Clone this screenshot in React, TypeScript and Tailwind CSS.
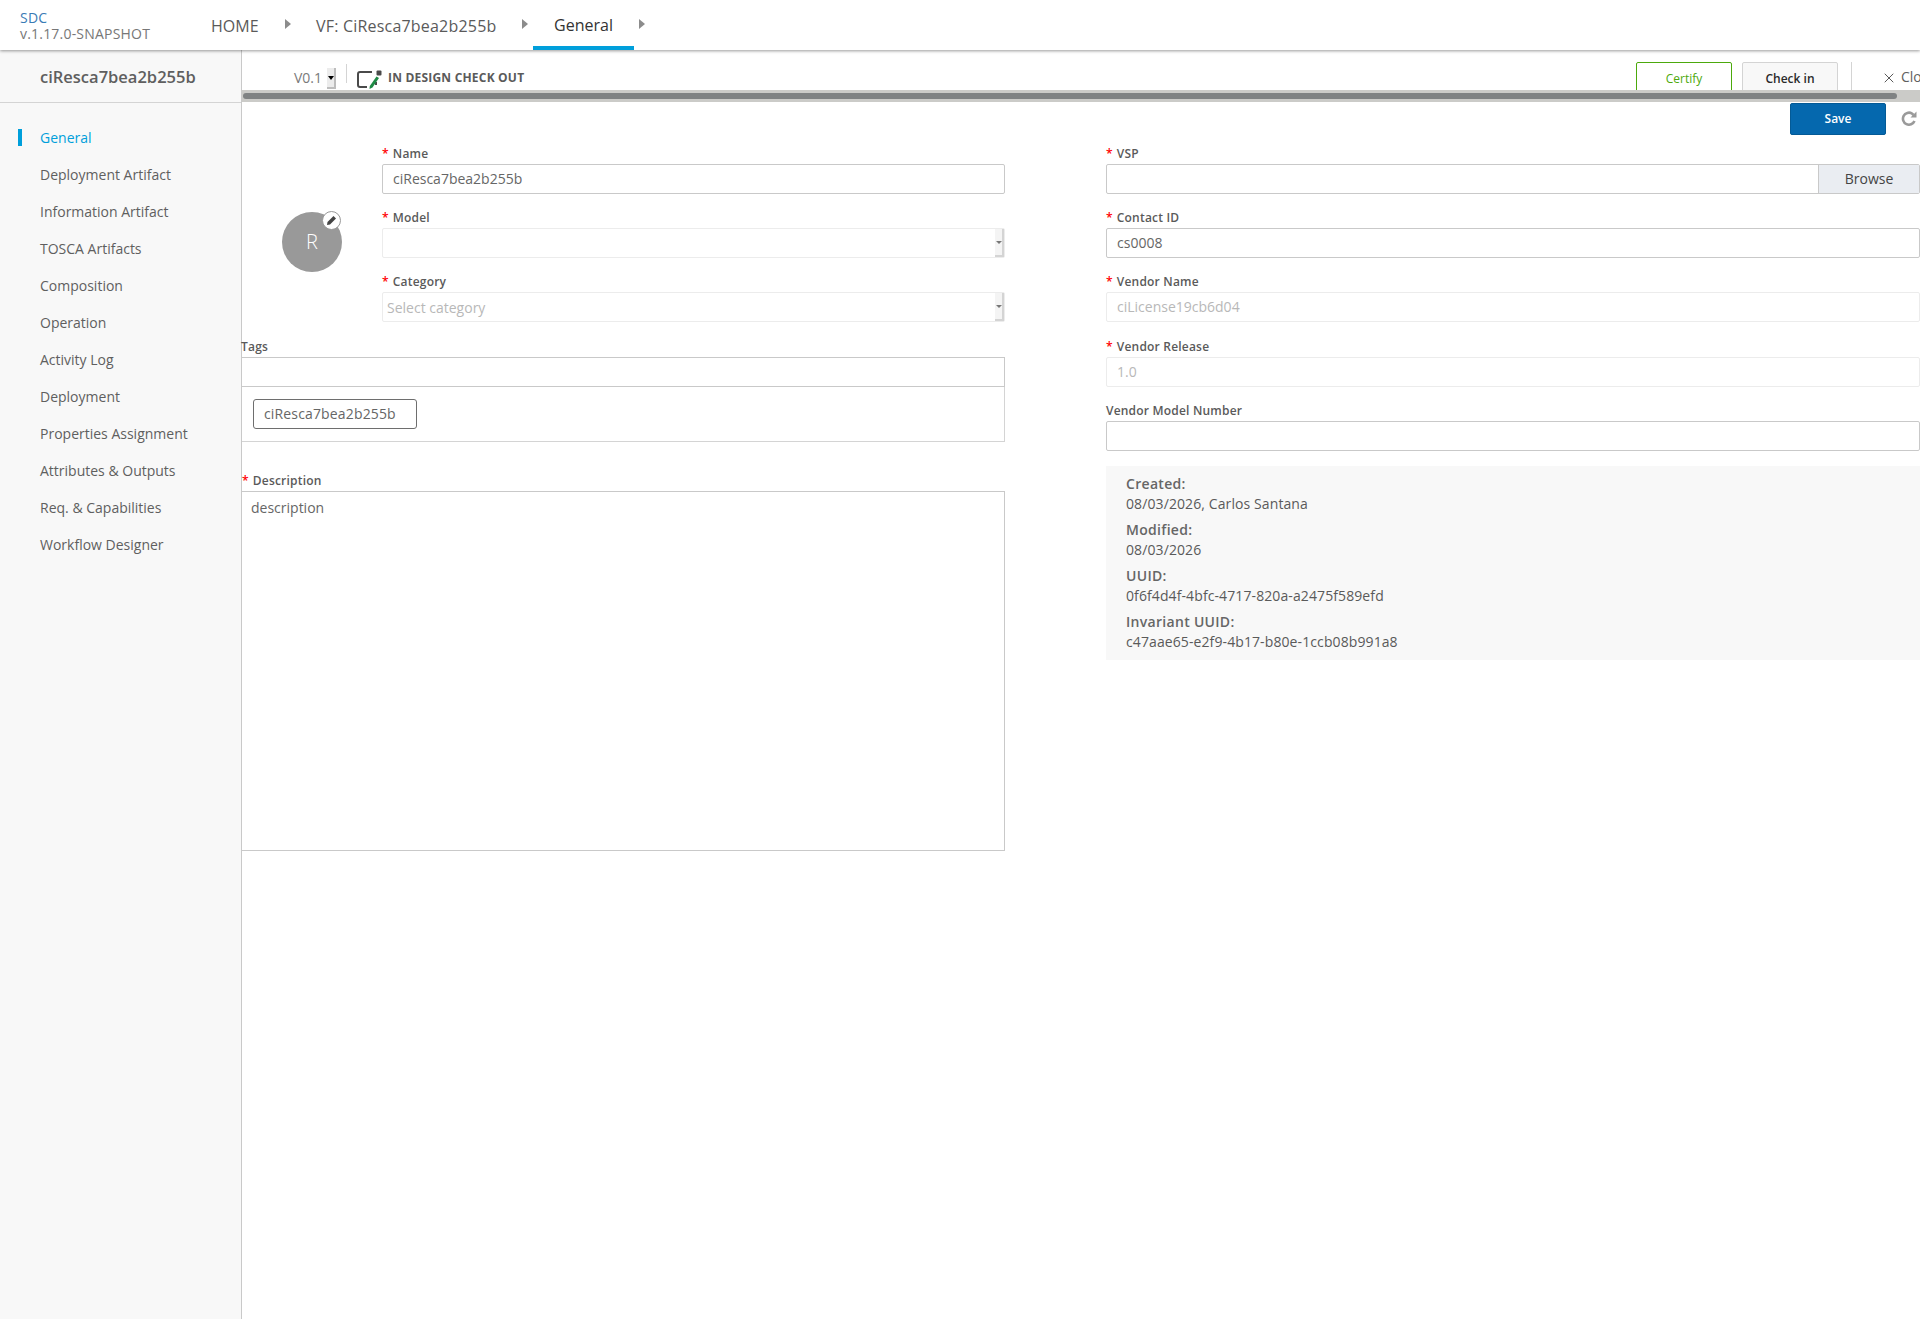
import { X } from "lucide-react";

const navItems = [
  "General",
  "Deployment Artifact",
  "Information Artifact",
  "TOSCA Artifacts",
  "Composition",
  "Operation",
  "Activity Log",
  "Deployment",
  "Properties Assignment",
  "Attributes & Outputs",
  "Req. & Capabilities",
  "Workflow Designer",
];

const info = [
  ["Created:", "08/03/2026, Carlos Santana"],
  ["Modified:", "08/03/2026"],
  ["UUID:", "0f6f4d4f-4bfc-4717-820a-a2475f589efd"],
  ["Invariant UUID:", "c47aae65-e2f9-4b17-b80e-1ccb08b991a8"],
];

const Arrow = () => (
  <span className="mb-[2px] h-0 w-0 border-y-[5px] border-l-[6px] border-y-transparent border-l-[#8c8c8c]" />
);

const Label = ({ text, required = true }: { text: string; required?: boolean }) => (
  <div className="mb-[3px] flex h-[15px] items-center text-[12px] leading-[15px] font-semibold tracking-[0.2px] text-[#5a5a5a]">
    {required && <span className="mr-[4px] text-[#ff0000]">*</span>}
    {text}
  </div>
);

const Field = ({
  label,
  value = "",
  required = true,
  disabled = false,
}: {
  label: string;
  value?: string;
  required?: boolean;
  disabled?: boolean;
}) => (
  <div className="h-[64.2px]">
    <Label text={label} required={required} />
    <div
      className={`h-[30px] rounded-[2px] border px-[10px] text-[14px] leading-[28px] ${
        disabled ? "border-[#ececec] text-[#b8b8b8]" : "border-[#c9c9c9] text-[#666]"
      }`}
    >
      {value}
    </div>
  </div>
);

const SelectField = ({ label, placeholder = "" }: { label: string; placeholder?: string }) => (
  <div className="h-[64.2px]">
    <Label text={label} />
    <div className="flex h-[30px] items-stretch rounded-[2px] border border-[#ececec]">
      <div className="flex-1 pl-[4px] text-[14px] leading-[29px] text-[#b8b8b8]">{placeholder}</div>
      <div className="flex w-[9px] items-center justify-center border-r-2 border-b-2 border-[#d4d4d4] bg-[#f4f4f4]">
        <span className="h-0 w-0 border-x-[3px] border-t-[3px] border-x-transparent border-t-[#777]" />
      </div>
    </div>
  </div>
);

export default function App() {
  return (
    <div className="flex h-screen flex-col overflow-hidden bg-white font-['Open_Sans',sans-serif] text-[#666]">
      <header className="relative z-10 flex h-[50px] shrink-0 bg-white shadow-[0_1px_3px_rgba(0,0,0,0.4)]">
        <div className="w-[211px] pt-[10px] pl-[20px] text-[14px] leading-[15.5px] tracking-[0.2px]">
          <div className="text-[#3a7bb5]">SDC</div>
          <div className="text-[#777]">v.1.17.0-SNAPSHOT</div>
        </div>
        <div className="flex items-center text-[16px] text-[#5a5a5a]">
          <span className="mt-px w-[74px]">HOME</span>
          <Arrow />
          <span className="mt-px ml-[25px] w-[206px] tracking-[0.2px]">VF: CiResca7bea2b255b</span>
          <Arrow />
          <div className="ml-[5px] flex h-full w-[101px] items-center justify-center border-b-4 border-[#009fdb] text-[#333]">
            <span className="mt-[3px] font-medium">General</span>
          </div>
          <span className="ml-[5px] flex">
            <Arrow />
          </span>
        </div>
      </header>

      <div className="flex flex-1 overflow-hidden">
        <aside className="w-[242px] shrink-0 border-r border-[#c9c9c9] bg-[#f8f8f8]">
          <div className="flex h-[53px] items-center border-b border-[#d4d4d4] pt-[3px] pl-[40px] text-[16.5px] font-semibold text-[#5f5f5f]">
            ciResca7bea2b255b
          </div>
          <nav className="pt-[16px]">
            {navItems.map((item, i) => (
              <div key={item} className="flex h-[37px] items-center text-[14px]">
                <span className={`ml-[18px] h-[17px] w-[4px] ${i === 0 ? "bg-[#009fdb]" : ""}`} />
                <span className={`ml-[18px] ${i === 0 ? "text-[#009fdb]" : "text-[#5f5f5f]"}`}>{item}</span>
              </div>
            ))}
          </nav>
        </aside>

        <main className="min-w-0 flex-1">
          <div className="flex h-[40px] overflow-hidden">
            <span className="mt-[18px] ml-[52px] text-[14px] leading-[20px] text-[#7a7a7a]">V0.1</span>
            <div className="mt-[18px] ml-[5px] flex h-[21px] w-[9px] items-center justify-center border-r-2 border-b-2 border-[#bdbdbd] bg-[#ececec]">
              <span className="h-0 w-0 border-x-[3px] border-t-[4px] border-x-transparent border-t-black" />
            </div>
            <span className="mt-[14px] ml-[10px] h-[19px] w-px bg-[#d4d4d4]" />
            <svg className="mt-[20px] ml-[10px]" width="25" height="19" viewBox="0 0 25 19">
              <path d="M15 2H3a2 2 0 0 0-2 2v11a2 2 0 0 0 2 2h7M19 12v3" fill="none" stroke="#4a4a4a" strokeWidth="2" />
              <rect x="19.5" y="0.5" width="5" height="5" rx="1" fill="#4a4a4a" />
              <path d="M19.5 6.5l2.5 1.5L15.5 17.5l-3 1.5.3-3z" fill="#1e8a45" />
            </svg>
            <span className="mt-[18px] ml-[6px] text-[12px] leading-[20px] font-bold tracking-[0.2px] text-[#5a5a5a]">
              IN DESIGN CHECK OUT
            </span>
            <div className="ml-auto flex w-[284px] shrink-0 items-start overflow-hidden pt-[12px]">
              <button className="h-[36px] w-[96px] shrink-0 rounded-t-[2px] border border-[#4ca90c] pb-[3px] text-[12px] font-medium text-[#4ca90c]">
                Certify
              </button>
              <button className="ml-[10px] h-[36px] w-[96px] shrink-0 rounded-t-[2px] border border-[#d4d4d4] bg-[#f8f8f8] pb-[3px] text-[12px] font-semibold text-[#2a2a2a]">
                Check in
              </button>
              <span className="ml-[13px] h-[30px] w-px shrink-0 bg-[#d4d4d4]" />
              <X className="mt-[8px] ml-[29px] shrink-0 text-[#5a5a5a]" size={16} strokeWidth={1.5} />
              <span className="mt-[4px] ml-[4px] shrink-0 text-[14px] text-[#5f5f5f]">Close</span>
            </div>
          </div>

          <div className="flex h-[12px] items-center bg-[#cbcbc8] pl-[1px]">
            <div className="h-[6px] w-[1654px] rounded-[3px] bg-[#7f8283]" />
          </div>

          <div className="flex h-[33px] items-start justify-end pt-[1px]">
            <button className="h-[32px] w-[96px] rounded-[2px] border border-[#045a96] bg-[#0568ae] text-[12px] font-semibold text-white">
              Save
            </button>
            <svg className="mt-[7px] mr-[3px] ml-[15px]" width="16" height="16" viewBox="0 0 16 16">
              <path d="M13.5 11a6 6 0 1 1 -2.5-7.5L12.5 5" fill="none" stroke="#9a9a9a" strokeWidth="2.6" />
              <path d="M15.5 1.5v6h-6z" fill="#9a9a9a" />
            </svg>
          </div>

          <div className="flex pt-[11px]">
            <div className="w-[763px] shrink-0">
              <div className="flex">
                <div className="flex w-[140px] shrink-0 items-center">
                  <div className="relative -mt-px ml-[40px] flex h-[60px] w-[60px] items-center justify-center rounded-full bg-[#999999] text-[20px] font-light text-white">
                    R
                    <span className="absolute top-[-1px] right-[1px] flex h-[19px] w-[19px] items-center justify-center rounded-full border border-[#999] bg-white">
                      <svg width="11" height="11" viewBox="0 0 11 11">
                        <path d="M7.5 1l2.5 2.5L4 9.5 1 10l.5-3z" fill="#444" />
                      </svg>
                    </span>
                  </div>
                </div>
                <div className="w-[623px]">
                  <Field label="Name" value="ciResca7bea2b255b" />
                  <SelectField label="Model" />
                  <SelectField label="Category" placeholder="Select category" />
                </div>
              </div>

              <div className="-ml-px">
                <Label text="Tags" required={false} />
              </div>
              <div className="h-[30px] border-y border-r border-[#c9c9c9]" />
              <div className="flex h-[55px] items-center border-r border-b border-[#d4d4d4] pl-[11px]">
                <span className="flex h-[30px] w-[164px] items-center rounded-[3px] border border-[#6e6e6e] pl-[10px] text-[14px] tracking-[0.15px]">
                  ciResca7bea2b255b
                </span>
              </div>

              <div className="mt-[31px]">
                <Label text="Description" />
              </div>
              <div className="h-[360px] border-y border-r border-[#c9c9c9] px-[9px] py-[6px] text-[14px] leading-[20px]">
                description
              </div>
            </div>

            <div className="ml-[101px] min-w-0 flex-1">
              <div className="h-[64.2px]">
                <Label text="VSP" />
                <div className="flex h-[30px] rounded-[2px] border border-[#c9c9c9]">
                  <div className="flex-1" />
                  <div className="flex w-[101px] items-center justify-center border-l border-[#c9c9c9] bg-[#eaedf2] pb-px text-[14px] text-[#444]">
                    Browse
                  </div>
                </div>
              </div>
              <Field label="Contact ID" value="cs0008" />
              <Field label="Vendor Name" value="ciLicense19cb6d04" disabled />
              <Field label="Vendor Release" value="1.0" disabled />
              <Field label="Vendor Model Number" required={false} />
              <div className="-mt-px h-[194px] bg-[#f8f8f8] pt-[8px] pl-[20px] text-[14px] leading-[20px]">
                {info.map(([k, v]) => (
                  <div key={k} className="mb-[6px]">
                    <div className="font-semibold tracking-[0.3px] text-[#666]">{k}</div>
                    <div className="tracking-[0.1px] text-[#5a5a5a]">{v}</div>
                  </div>
                ))}
              </div>
            </div>
          </div>
        </main>
      </div>
    </div>
  );
}
